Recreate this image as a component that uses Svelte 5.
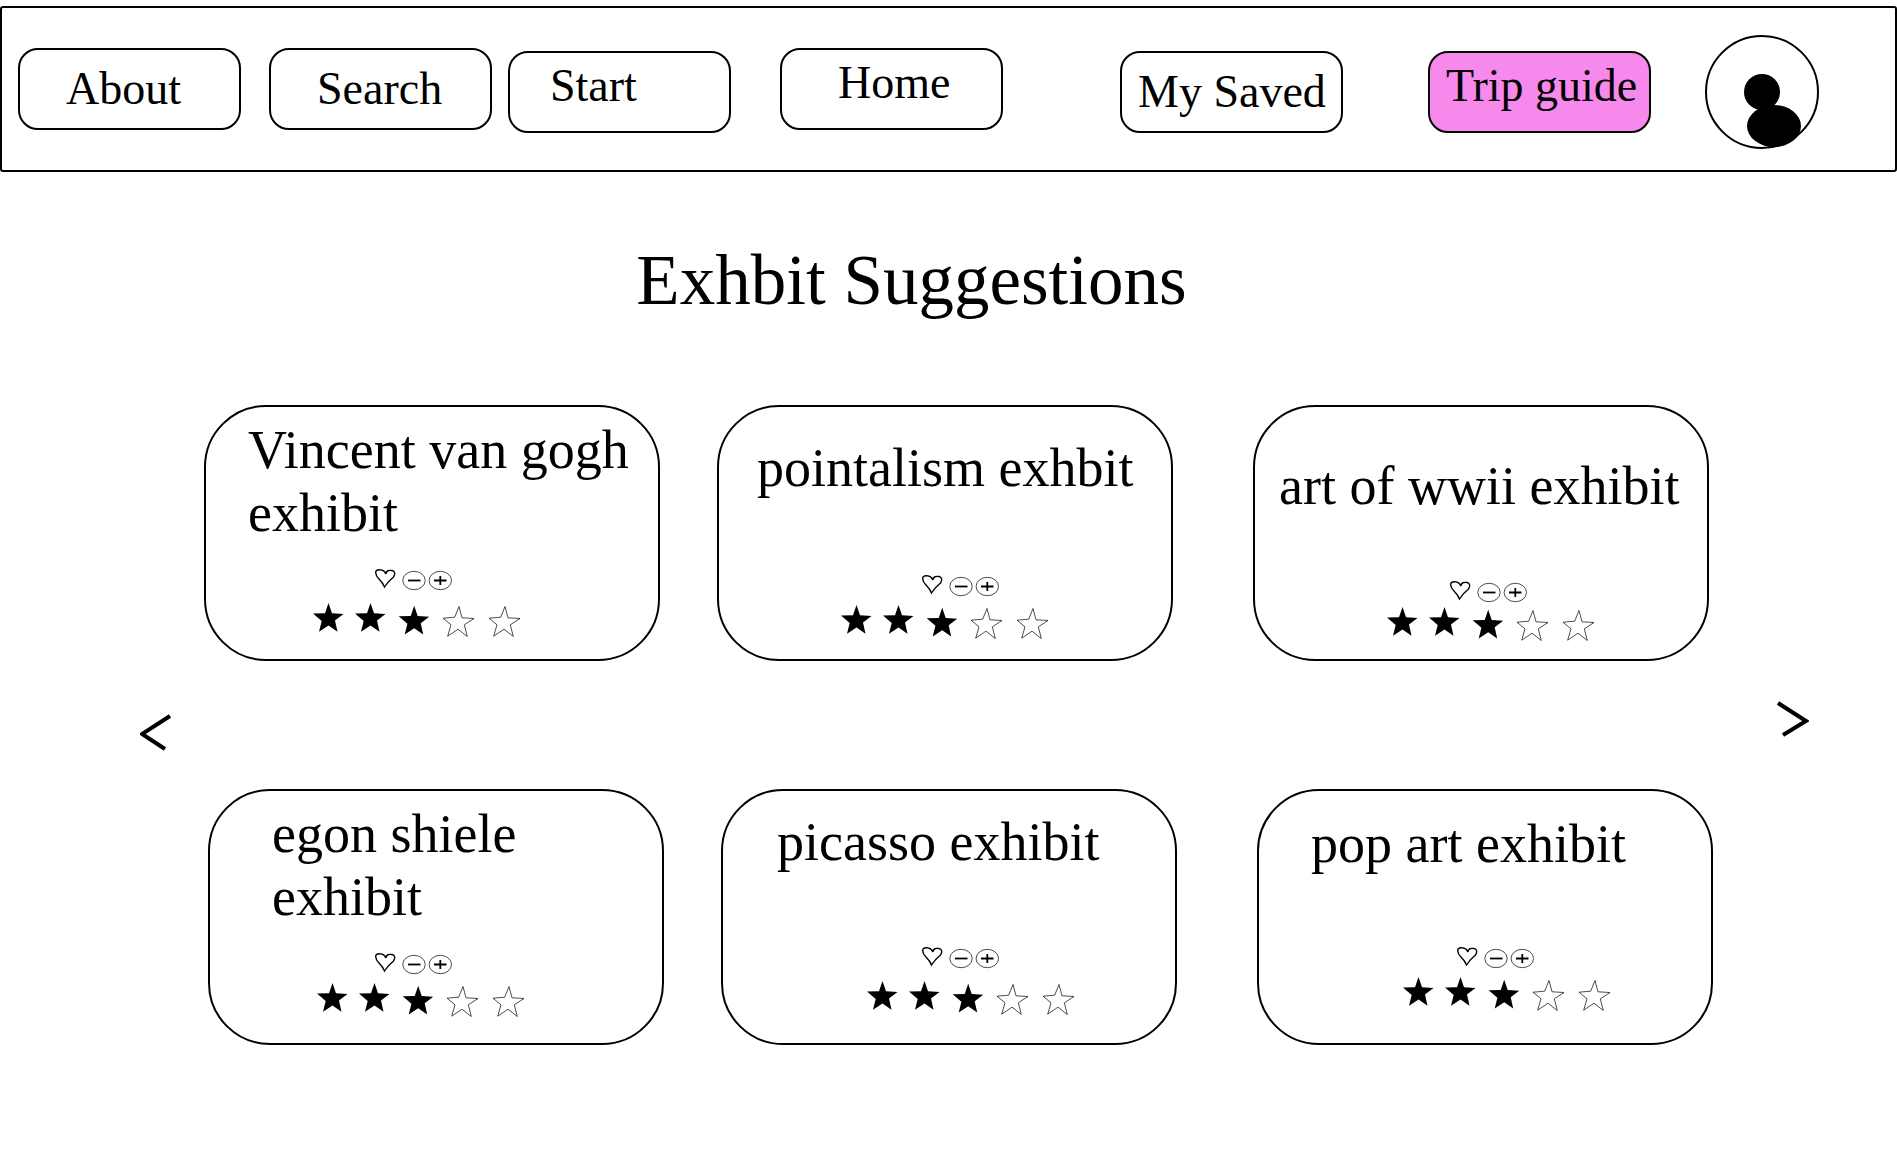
<script lang="ts">
	type Link = { slot: string; label: string; look: string };
	type Exhibit = { key: string; name: string };

	const links: Link[] = [
		{ slot: 'about', label: 'About', look: '' },
		{ slot: 'search', label: 'Search', look: '' },
		{ slot: 'start', label: 'Start', look: 'low raised' },
		{ slot: 'home', label: 'Home', look: 'raised indent' },
		{ slot: 'saved', label: 'My Saved', look: 'low tight' },
		{ slot: 'trip', label: 'Trip guide', look: 'low raised tight current' }
	];

	const rows: Exhibit[][] = [
		[
			{ key: 'gogh', name: 'Vincent van gogh exhibit' },
			{ key: 'pointalism', name: 'pointalism exhbit' },
			{ key: 'wwii', name: 'art of wwii exhibit' }
		],
		[
			{ key: 'shiele', name: 'egon shiele exhibit' },
			{ key: 'picasso', name: 'picasso exhibit' },
			{ key: 'pop', name: 'pop art exhibit' }
		]
	];
</script>

<header>
	<nav>
		{#each links as link}
			<a href="#{link.slot}" class="link {link.slot} {link.look}">{link.label}</a>
		{/each}
		<a href="#profile" class="profile low" aria-label="Profile">
			<svg viewBox="0 0 114 114">
				<circle cx="57" cy="57" r="56" fill="none" stroke="#000" stroke-width="2" />
				<circle cx="57" cy="57" r="18" />
				<ellipse cx="69" cy="91" rx="27" ry="21" />
			</svg>
		</a>
	</nav>
</header>

<main>
	<h1>Exhbit Suggestions</h1>

	<div class="gallery">
		<button class="arrow prev" aria-label="Previous">
			<svg width="32" height="38" viewBox="0 0 32 38">
				<path d="M30 2 L2 20 L25 35" />
			</svg>
		</button>

		<div class="rows">
			{#each rows as row}
				<div class="row">
					{#each row as exhibit}
						<article class="card {exhibit.key}">
							<h2>{exhibit.name}</h2>
							<div class="tools">
								<button aria-label="Save {exhibit.name}">
									<svg width="26" height="22" viewBox="0 0 26 22">
										<path
											d="M12 5 C10 0 4 0 2 2 C1 5 3 8 5 10 C7 12 9 14 10.5 18 C13 14 17 10 19.5 8 C21.5 5 21 2 18 1.500 C15 1 12 1.500 12 5 Z"
											fill="none" stroke="#000" stroke-width="1.4" />
									</svg>
								</button>
								<button aria-label="Remove {exhibit.name}">
									<svg width="24" height="22" viewBox="0 0 24 22">
										<ellipse cx="12" cy="11.500" rx="11.200" ry="9.200" fill="none" stroke="#000" stroke-width="0.7" />
										<path d="M6 11.500 H18.500" stroke="#000" stroke-width="1.800" />
									</svg>
								</button>
								<button aria-label="Add {exhibit.name}">
									<svg width="24" height="22" viewBox="0 0 24 22">
										<ellipse cx="12.300" cy="11.500" rx="11.200" ry="9.200" fill="none" stroke="#000" stroke-width="0.7" />
										<path d="M6 11.500 H18.500 M12.300 7 V16" stroke="#000" stroke-width="1.800" />
									</svg>
								</button>
							</div>
							<svg class="stars" width="208" height="34" viewBox="0 0 208 34" role="img" aria-label="3 out of 5 stars">
								{#each [[0, 0], [42, 0], [85.7, 2.7]] as [x, y]}
									<polygon
										transform="translate({x} {y})"
										points="15.5,0 19,10.3 30.5,11 22,17.5 24.5,28.7 15.5,22.5 6,28.7 8.7,18 0,10.5 12,10.3" />
								{/each}
								{#each [130, 176] as x}
									<polygon
										transform="translate({x} 3.5)"
										points="16,0 19,11.3 31,12 21.3,18.3 24.3,30 15,22.7 4.7,29.7 8,18.3 0,11.7 11.7,10.7"
										fill="none" stroke="#000" stroke-width="0.7" />
								{/each}
							</svg>
						</article>
					{/each}
				</div>
			{/each}
		</div>

		<button class="arrow next" aria-label="Next">
			<svg width="32" height="38" viewBox="0 0 32 38">
				<path d="M1 3 L29 21 L6 35" />
			</svg>
		</button>
	</div>
</main>

<style>
	:global(body) {
		background: #fff;
		color: #000;
		font-family: 'Liberation Serif', 'Times New Roman', serif;
	}

	header {
		padding-top: 6px;
	}

	nav {
		box-sizing: border-box;
		min-height: 166px;
		padding-left: 16px;
		border: 2px solid #000;
		border-radius: 3px;
		display: grid;
		align-items: center;
		grid-template-columns:
			[about] 223fr 28fr
			[search] 223fr 16fr
			[start] 223fr 49fr
			[home] 223fr 117fr
			[saved] 223fr 85fr
			[trip] 223fr 54fr
			[profile] 114fr 76fr;
	}

	a {
		color: inherit;
		text-decoration: none;
	}

	.link {
		box-sizing: border-box;
		height: 82px;
		padding: 12px 0 0 46px;
		border: 2px solid #000;
		border-radius: 20px;
		font-size: 46px;
		line-height: 54px;
		white-space: nowrap;
	}

	.about { grid-column: about; }
	.search { grid-column: search; }
	.start { grid-column: start; }
	.home { grid-column: home; }
	.saved { grid-column: saved; }
	.trip { grid-column: trip; }

	.profile {
		grid-column: profile;
	}

	.profile svg {
		display: block;
		width: 100%;
	}

	.low {
		margin-top: 6px;
	}

	.raised {
		padding-top: 6px;
	}

	.low.raised {
		padding-left: 40px;
	}

	.indent {
		padding-left: 56px;
	}

	.link.tight {
		padding-left: 16px;
	}

	.current {
		background: #f788ec;
	}

	h1 {
		margin: 66px 0 83px;
		padding-right: 74px;
		font-size: 71px;
		font-weight: 400;
		line-height: 84px;
		text-align: center;
	}

	.gallery {
		display: flex;
		align-items: center;
		padding: 0 88px 64px 140px;
	}

	.rows {
		flex: 1;
		display: grid;
		gap: 128px;
		margin: 0 68px 0 32px;
	}

	.row {
		display: grid;
		grid-template-columns: [first] 456fr 57fr [second] 456fr 80fr [third] 456fr;
	}

	.row:nth-child(2) {
		margin: 0 -4px 0 4px;
	}

	.card:nth-child(1) { grid-column: first; }
	.card:nth-child(2) { grid-column: second; }
	.card:nth-child(3) { grid-column: third; }

	.card {
		box-sizing: border-box;
		min-height: 256px;
		display: flex;
		flex-direction: column;
		align-items: flex-start;
		border: 2px solid #000;
		border-radius: 62px;
	}

	h2 {
		margin: 0;
		font-size: 54px;
		font-weight: 400;
		line-height: 63px;
	}

	button {
		padding: 0;
		border: 0;
		background: none;
		color: inherit;
		cursor: pointer;
	}

	button svg,
	.stars {
		display: block;
	}

	.tools {
		display: flex;
		gap: 2px;
		margin: auto 0 8px;
	}

	/* every card has its own loose arrangement */
	.gogh { padding: 12px 0 22px; }
	.gogh h2 { padding-left: 42px; }
	.gogh .tools { margin: auto 0 12px 168px; }
	.gogh .stars { margin-left: 107px; }

	.pointalism { padding: 30px 0 20px; }
	.pointalism h2 { padding-left: 38px; }
	.pointalism .tools { margin-left: 202px; }
	.pointalism .stars { margin-left: 122px; }

	.wwii { padding: 48px 0 18px; }
	.wwii h2 { padding-left: 24px; }
	.wwii .tools { margin: auto 0 4px 194px; }
	.wwii .stars { margin-left: 132px; }

	.shiele { padding: 12px 0 26px; }
	.shiele h2 { padding-left: 62px; }
	.shiele .tools { margin-left: 164px; }
	.shiele .stars { margin-left: 107px; }

	.picasso { padding: 20px 0 28px; }
	.picasso h2 { padding-left: 54px; }
	.picasso .tools { margin: auto 0 12px 198px; }
	.picasso .stars { margin-left: 144px; }

	.pop { padding: 22px 0 32px; }
	.pop h2 { padding-left: 52px; }
	.pop .tools { margin-left: 197px; }
	.pop .stars { margin-left: 144px; }

	.arrow path {
		fill: none;
		stroke: #000;
		stroke-width: 4;
	}

	.prev {
		padding-top: 16px;
	}

	.next {
		padding-bottom: 12px;
	}
</style>
